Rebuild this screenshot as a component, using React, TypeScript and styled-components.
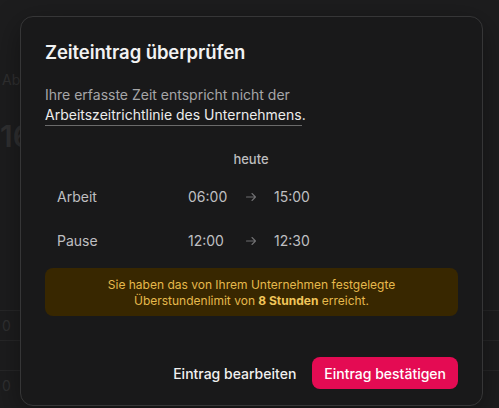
import React from "react";
import styled, { createGlobalStyle } from "styled-components";

const Global = createGlobalStyle`
  html, body { margin: 0; padding: 0; background: #1d1d1e; }
  body { font-family: Inter, "Noto Sans", sans-serif; -webkit-font-smoothing: antialiased; }
  * { box-sizing: border-box; }
`;

const Page = styled.div`
  position: relative;
  width: 499px;
  height: 408px;
  overflow: hidden;
  background: #1d1d1e;
`;

const Backdrop = styled.div`
  display: flex;
  flex-direction: column;
  padding: 70px 0 0 0;
  color: #303031;
`;

const BgLabel = styled.div`
  font-size: 14px;
  padding-left: 2px;
  height: 20px;
  line-height: 20px;
`;

const BgBig = styled.div`
  font-size: 30px;
  font-weight: 600;
  margin-top: 28px;
  line-height: 36px;
`;

const BgRows = styled.div`
  margin-top: 156px;
  display: flex;
  flex-direction: column;
`;

const BgRow = styled.div`
  height: 30px;
  border-top: 1px solid #272728;
  font-size: 14px;
  line-height: 30px;
  padding-left: 2px;
`;

const Dialog = styled.div`
  position: absolute;
  left: 20px;
  top: 16px;
  width: 463px;
  height: 390px;
  background: #19191a;
  border: 1px solid #363637;
  border-radius: 13px;
  padding: 23px 24px 0 24px;
  display: flex;
  flex-direction: column;
  box-shadow: 0 8px 30px rgba(0, 0, 0, 0.4);
`;

const Title = styled.h2`
  margin: 0;
  font-size: 18.5px;
  font-weight: 600;
  color: #f2f2f2;
  line-height: 24px;
  letter-spacing: -0.1px;
`;

const Text = styled.p`
  margin: 21px 0 0 0;
  font-size: 14px;
  line-height: 20px;
  color: #a6a6a8;
`;

const Link = styled.span`
  color: #ececec;
  border-bottom: 1px solid #6a6a6a;
  padding-bottom: 2px;
`;

const Plain = styled.span`
  color: #ececec;
`;

const Table = styled.div`
  margin-top: 24px;
  display: grid;
  grid-template-columns: 131px 40px 46px 40px;
  align-items: center;
  padding-left: 12px;
`;

const DayHead = styled.div`
  grid-column: 2 / span 3;
  text-align: center;
  font-size: 13px;
  font-weight: 500;
  color: #bdbdbf;
  height: 20px;
  line-height: 20px;
  margin-bottom: 6px;
`;

const Cell = styled.div`
  font-size: 14px;
  color: #bfbfc1;
  height: 44px;
  line-height: 44px;
  white-space: nowrap;
`;

const ArrowCell = styled.div`
  height: 44px;
  display: flex;
  align-items: center;
  justify-content: center;
  color: #6f6f71;
`;

const Warning = styled.div`
  margin-top: 5px;
  background: #382700;
  border-radius: 8px;
  padding: 9px 16px 8px;
  text-align: center;
  font-size: 12px;
  line-height: 15.5px;
  color: #e6b94c;
`;

const Strong = styled.strong`
  font-weight: 700;
  color: #f0c55a;
`;

const Footer = styled.div`
  margin-top: auto;
  margin-bottom: 16px;
  display: flex;
  justify-content: flex-end;
  align-items: center;
  gap: 16px;
`;

const GhostButton = styled.button`
  background: transparent;
  border: none;
  color: #f0f0f0;
  font-family: inherit;
  font-size: 14px;
  font-weight: 500;
  padding: 0;
  height: 32px;
  cursor: pointer;
`;

const PrimaryButton = styled.button`
  background: #e40b53;
  border: none;
  color: #fff;
  font-family: inherit;
  font-size: 14px;
  font-weight: 500;
  height: 32px;
  padding: 0 12px;
  border-radius: 8px;
  cursor: pointer;
`;

const Arrow = () => (
  <svg width="12" height="12" viewBox="0 0 12 12" fill="none" stroke="currentColor" strokeWidth="1.1" strokeLinecap="round" strokeLinejoin="round">
    <path d="M1.5 6h9M7 2.5 10.5 6 7 9.5" />
  </svg>
);

const rows = [
  { label: "Arbeit", from: "06:00", to: "15:00" },
  { label: "Pause", from: "12:00", to: "12:30" },
];

export default function App() {
  return (
    <Page>
      <Global />
      <Backdrop>
        <BgLabel>Ab</BgLabel>
        <BgBig>16</BgBig>
        <BgRows>
          <BgRow>0</BgRow>
          <BgRow>&nbsp;</BgRow>
          <BgRow>0</BgRow>
        </BgRows>
      </Backdrop>
      <Dialog role="dialog">
        <Title>Zeiteintrag überprüfen</Title>
        <Text>
          Ihre erfasste Zeit entspricht nicht der
          <br />
          <Link>Arbeitszeitrichtlinie des Unternehmens</Link>
          <Plain>.</Plain>
        </Text>
        <Table>
          <div />
          <DayHead>heute</DayHead>
          {rows.map((r) => (
            <React.Fragment key={r.label}>
              <Cell>{r.label}</Cell>
              <Cell>{r.from}</Cell>
              <ArrowCell>
                <Arrow />
              </ArrowCell>
              <Cell>{r.to}</Cell>
            </React.Fragment>
          ))}
        </Table>
        <Warning>
          Sie haben das von Ihrem Unternehmen festgelegte
          <br />
          Überstundenlimit von <Strong>8 Stunden</Strong> erreicht.
        </Warning>
        <Footer>
          <GhostButton>Eintrag bearbeiten</GhostButton>
          <PrimaryButton>Eintrag bestätigen</PrimaryButton>
        </Footer>
      </Dialog>
    </Page>
  );
}
